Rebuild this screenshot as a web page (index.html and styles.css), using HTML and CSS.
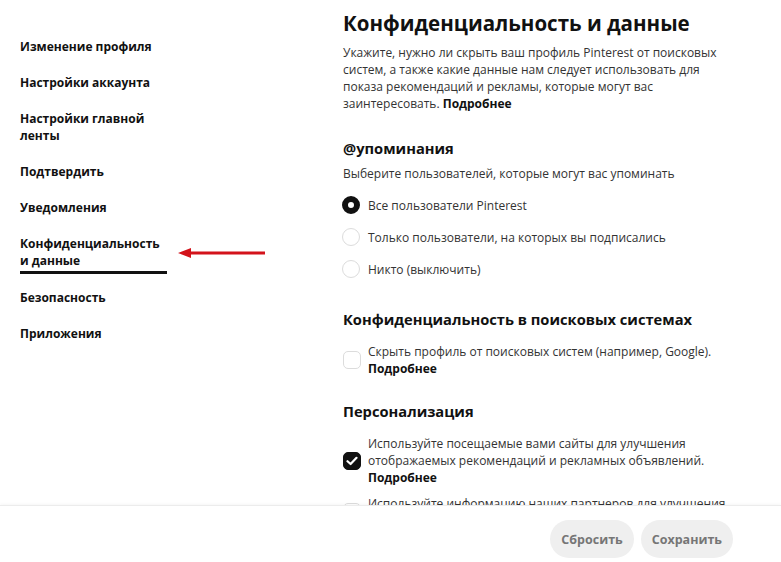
FILE: index.html
```html
<!DOCTYPE html>
<html lang="ru">
<head>
<meta charset="utf-8">
<title>Конфиденциальность и данные</title>
<link rel="stylesheet" href="styles.css">
</head>
<body>
<div class="page">
  <div class="scroll">
    <nav class="sidebar">
      <a class="nav-item">Изменение профиля</a>
      <a class="nav-item">Настройки аккаунта</a>
      <a class="nav-item">Настройки главной ленты</a>
      <a class="nav-item">Подтвердить</a>
      <a class="nav-item">Уведомления</a>
      <a class="nav-item active">Конфиденциальность и данные
        <span class="arrow"><svg width="88" height="10" viewBox="0 0 88 10"><path d="M0 5 L13 0 L13 3.6 L87 3.6 L87 6.4 L13 6.4 L13 10 Z" fill="#d3131b"/></svg></span>
      </a>
      <a class="nav-item">Безопасность</a>
      <a class="nav-item">Приложения</a>
    </nav>
    <main class="main">
      <h1 class="title">Конфиденциальность и данные</h1>
      <p class="desc">Укажите, нужно ли скрыть ваш профиль Pinterest от поисковых систем, а также какие данные нам следует использовать для показа рекомендаций и рекламы, которые могут вас заинтересовать. <b>Подробнее</b></p>

      <h2 class="section-title first">@упоминания</h2>
      <p class="hint">Выберите пользователей, которые могут вас упоминать</p>
      <div class="radios">
        <label class="option"><span class="radio checked"></span><span>Все пользователи Pinterest</span></label>
        <label class="option"><span class="radio"></span><span>Только пользователи, на которых вы подписались</span></label>
        <label class="option"><span class="radio"></span><span>Никто (выключить)</span></label>
      </div>

      <h2 class="section-title">Конфиденциальность в поисковых системах</h2>
      <label class="check-row"><span class="box"></span><span class="check-text">Скрыть профиль от поисковых систем (например, Google).<br><b>Подробнее</b></span></label>

      <h2 class="section-title">Персонализация</h2>
      <label class="check-row"><span class="box checked"><svg width="12" height="10" viewBox="0 0 12 10"><path d="M1.5 5.2 L4.6 8 L10.5 1.8" fill="none" stroke="#fff" stroke-width="2.2" stroke-linecap="round" stroke-linejoin="round"/></svg></span><span class="check-text">Используйте посещаемые вами сайты для улучшения отображаемых рекомендаций и рекламных объявлений.<br><b>Подробнее</b></span></label>
      <label class="check-row next"><span class="box"></span><span class="check-text">Используйте информацию наших партнеров для улучшения отображаемых рекомендаций и рекламных объявлений.</span></label>
    </main>
  </div>
  <footer class="footer">
    <button class="btn">Сбросить</button>
    <button class="btn">Сохранить</button>
  </footer>
</div>
</body>
</html>
```

FILE: styles.css
```css
* { box-sizing: border-box; }
html, body { margin: 0; padding: 0; background: #fff; }
body {
  font-family: "Open Sans", "Noto Sans", "DejaVu Sans", sans-serif;
  color: #111;
}
.page {
  width: 781px;
  height: 562px;
  display: flex;
  flex-direction: column;
  overflow: hidden;
}
.scroll {
  flex: 1;
  min-height: 0;
  overflow: hidden;
  display: grid;
  grid-template-columns: 343px 400px;
}
.sidebar {
  display: flex;
  flex-direction: column;
  gap: 19px;
  padding: 38px 0 0 20px;
}
.nav-item {
  position: relative;
  display: block;
  width: 146px;
  font-size: 12px;
  font-weight: 700;
  line-height: 17px;
  color: #111;
}
.nav-item.active {
  padding-bottom: 2px;
  margin-bottom: -4px;
  border-bottom: 3px solid #111;
  width: 147px;
}
.arrow {
  position: absolute;
  left: 158px;
  top: 13px;
  line-height: 0;
}
.main {
  padding-top: 9px;
}
.title {
  margin: 0;
  font-size: 20.5px;
  line-height: 28px;
  font-weight: 700;
  color: #111;
}
.desc {
  margin: 7px 0 0;
  font-size: 12px;
  line-height: 17px;
  color: #333;
  width: 390px;
}
.desc b, .check-text b { color: #111; font-weight: 700; }
.section-title {
  margin: 24px 0 0;
  font-size: 14.7px;
  line-height: 20px;
  font-weight: 700;
  color: #111;
}
.section-title.first { margin-top: 26px; }
.hint {
  margin: 7px 0 0;
  font-size: 12px;
  line-height: 17px;
  color: #333;
}
.radios {
  margin-top: 7px;
  display: flex;
  flex-direction: column;
}
.option {
  height: 32px;
  display: flex;
  align-items: center;
  gap: 8px;
  font-size: 12px;
  color: #333;
}
.radio {
  width: 18px;
  height: 18px;
  border-radius: 50%;
  border: 1px solid #dcdcdc;
  flex: none;
  margin-left: -1px;
}
.radio.checked {
  border: 6px solid #111;
  background: #fff;
}
.check-row {
  margin-top: 13px;
  display: flex;
  align-items: center;
  gap: 7px;
}
.section-title + .check-row { margin-top: 14px; }
.check-row.next { margin-top: 9px; }
.box {
  width: 18px;
  height: 18px;
  border-radius: 5px;
  border: 1px solid #dcdcdc;
  flex: none;
  display: flex;
  align-items: center;
  justify-content: center;
}
.box.checked {
  background: #111;
  border-color: #111;
}
.check-text {
  font-size: 12px;
  line-height: 17px;
  color: #333;
  width: 370px;
}
.footer {
  flex: none;
  height: 57px;
  border-top: 1px solid #ececec;
  box-shadow: 0 -1px 3px rgba(0,0,0,0.04);
  background: #fff;
  display: flex;
  justify-content: flex-end;
  align-items: flex-start;
  gap: 7px;
  padding: 14px 48px 0 0;
  position: relative;
}
.btn {
  height: 38px;
  border: none;
  border-radius: 19px;
  background: #efefef;
  color: #767676;
  font-family: inherit;
  font-size: 12.5px;
  font-weight: 700;
  padding: 0 11px;
}
```
